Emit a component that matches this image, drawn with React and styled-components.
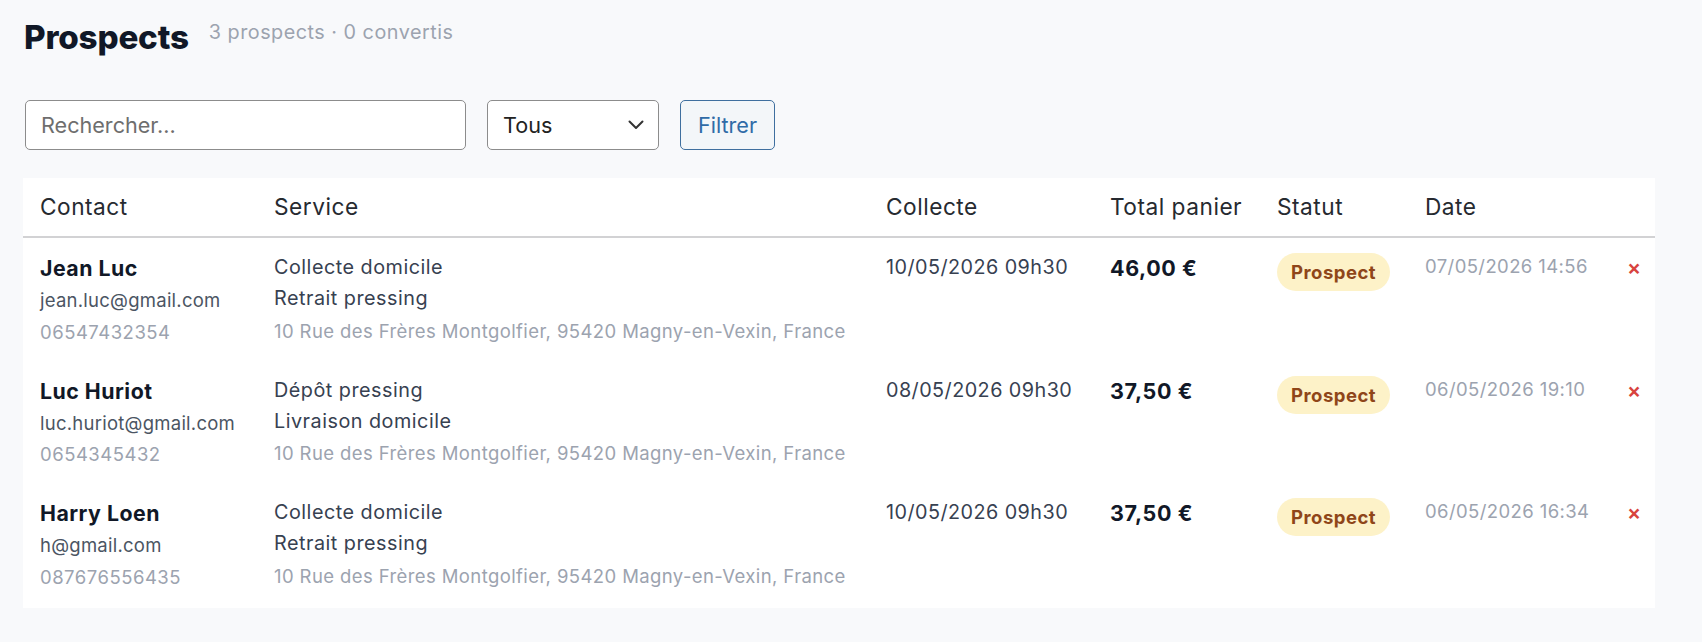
import React from 'react'
import styled, { createGlobalStyle } from 'styled-components'

const GlobalStyle = createGlobalStyle`
  * { box-sizing: border-box; }
  body {
    margin: 0;
    background: #f8f9fb;
    font-family: Inter, "Noto Sans", "Liberation Sans", sans-serif;
  }
`

const Page = styled.div`
  padding: 18px 0 30px 24px;
`
const Header = styled.div`
  display: flex;
  align-items: flex-start;
  gap: 20px;
`
const Title = styled.h1`
  margin: 0;
  font-size: 33.2px;
  line-height: 39px;
  font-weight: 800;
  color: #111827;
  letter-spacing: -0.2px;
`
const Subtitle = styled.span`
  font-size: 19.8px;
  line-height: 28px;
  letter-spacing: 0.5px;
  color: #9ca3af;
`
const Filters = styled.div`
  display: flex;
  gap: 21px;
  margin-top: 43px;
  padding-left: 1px;
`
const SearchInput = styled.input`
  width: 441px;
  height: 50px;
  border: 1.5px solid #8c8c8c;
  border-radius: 5px;
  background: #fff;
  padding: 0 15px;
  font-family: inherit;
  font-size: 21.6px;
  color: #222;
  &::placeholder { color: #6e6e6e; }
`
const SelectWrap = styled.div`
  position: relative;
  width: 172px;
  height: 50px;
`
const Select = styled.select`
  appearance: none;
  width: 100%;
  height: 100%;
  border: 1.5px solid #8c8c8c;
  border-radius: 5px;
  background: #fff;
  padding: 0 15px;
  font-family: inherit;
  font-size: 21.6px;
  color: #222;
`
const Chevron = styled.svg`
  position: absolute;
  right: 15px;
  top: 20px;
  pointer-events: none;
`
const FilterButton = styled.button`
  height: 50px;
  padding: 0 17px;
  border: 1.5px solid #3f6f9f;
  border-radius: 5px;
  background: #f3f6f9;
  color: #2f6ba7;
  font-family: inherit;
  font-size: 21.6px;
`
const Card = styled.div`
  margin-top: 28px;
  margin-left: -1px;
  padding-bottom: 2px;
  width: 1632px;
  background: #fff;
`
const Table = styled.table`
  width: 100%;
  border-collapse: collapse;
  table-layout: fixed;
`
const Th = styled.th`
  text-align: left;
  font-weight: 400;
  font-size: 22.7px;
  line-height: 32px;
  letter-spacing: 0.5px;
  color: #262a30;
  padding: 13px 17px;
  border-bottom: 2px solid #d2d2d4;
`
const Td = styled.td`
  vertical-align: top;
  padding: 15px 17px 13px;
`
const Line = styled.div`
  margin-top: ${p => p.mt || 0}px;
  font-size: ${p => p.size || 19.8}px;
  line-height: ${p => p.lh || 30}px;
  letter-spacing: ${p => (p.ls === undefined ? 0.5 : p.ls)}px;
  font-weight: ${p => (p.bold ? 700 : 400)};
  color: ${p => p.color || '#374151'};
  white-space: nowrap;
`
const Badge = styled.span`
  display: inline-block;
  padding: 7px 14px;
  border-radius: 999px;
  background: #fdf2c8;
  color: #8f4619;
  font-size: 18.5px;
  line-height: 24px;
  letter-spacing: 0.5px;
  font-weight: 700;
`
const DeleteButton = styled.button`
  border: none;
  background: none;
  padding: 0;
  color: #d8433e;
  font-family: inherit;
  font-size: 21px;
  line-height: 30px;
  font-weight: 600;
  cursor: pointer;
`

const prospects = [
  {
    name: 'Jean Luc',
    email: 'jean.luc@gmail.com',
    phone: '06547432354',
    services: ['Collecte domicile', 'Retrait pressing'],
    collecte: '10/05/2026 09h30',
    total: '46,00 €',
    date: '07/05/2026 14:56',
  },
  {
    name: 'Luc Huriot',
    email: 'luc.huriot@gmail.com',
    phone: '0654345432',
    services: ['Dépôt pressing', 'Livraison domicile'],
    collecte: '08/05/2026 09h30',
    total: '37,50 €',
    date: '06/05/2026 19:10',
  },
  {
    name: 'Harry Loen',
    email: 'h@gmail.com',
    phone: '087676556435',
    services: ['Collecte domicile', 'Retrait pressing'],
    collecte: '10/05/2026 09h30',
    total: '37,50 €',
    date: '06/05/2026 16:34',
  },
]

const address = '10 Rue des Frères Montgolfier, 95420 Magny-en-Vexin, France'

const App = () => {
  return (
    <>
      <GlobalStyle />
      <Page>
        <Header>
          <Title>Prospects</Title>
          <Subtitle>3 prospects · 0 convertis</Subtitle>
        </Header>
        <Filters>
          <SearchInput placeholder="Rechercher..." />
          <SelectWrap>
            <Select defaultValue="tous">
              <option value="tous">Tous</option>
            </Select>
            <Chevron width="16" height="10" viewBox="0 0 16 10" fill="none">
              <path d="M1.5 1.5 L8 8 L14.5 1.5" stroke="#333" strokeWidth="2" strokeLinecap="round" strokeLinejoin="round" />
            </Chevron>
          </SelectWrap>
          <FilterButton>Filtrer</FilterButton>
        </Filters>
        <Card>
          <Table>
            <colgroup>
              <col style={{ width: 234 }} />
              <col style={{ width: 612 }} />
              <col style={{ width: 224 }} />
              <col style={{ width: 167 }} />
              <col style={{ width: 148 }} />
              <col style={{ width: 202 }} />
              <col style={{ width: 45 }} />
            </colgroup>
            <thead>
              <tr>
                <Th>Contact</Th>
                <Th>Service</Th>
                <Th>Collecte</Th>
                <Th>Total panier</Th>
                <Th>Statut</Th>
                <Th>Date</Th>
                <Th></Th>
              </tr>
            </thead>
            <tbody>
              {prospects.map(p => (
                <tr key={p.name}>
                  <Td>
                    <Line bold size={21.3} color="#111827">{p.name}</Line>
                    <Line mt={2} size={18.5} ls={0.25} color="#4b5563">{p.email}</Line>
                    <Line mt={1.5} size={18.5} lh={31} color="#9ca3af">{p.phone}</Line>
                  </Td>
                  <Td>
                    {p.services.map((s, i) => (
                      <Line key={s} mt={i ? 1 : -1}>{s}</Line>
                    ))}
                    <Line mt={2.5} size={18.5} lh={31} ls={0.4} color="#9ca3af">{address}</Line>
                  </Td>
                  <Td>
                    <Line mt={-1} ls={0.45}>{p.collecte}</Line>
                  </Td>
                  <Td>
                    <Line bold size={21.5} ls={0.6} color="#111827">{p.total}</Line>
                  </Td>
                  <Td>
                    <Badge>Prospect</Badge>
                  </Td>
                  <Td>
                    <Line size={18.5} lh={26} ls={0.4} color="#9ca3af">{p.date}</Line>
                  </Td>
                  <Td>
                    <DeleteButton>×</DeleteButton>
                  </Td>
                </tr>
              ))}
            </tbody>
          </Table>
        </Card>
      </Page>
    </>
  )
}

export default App
